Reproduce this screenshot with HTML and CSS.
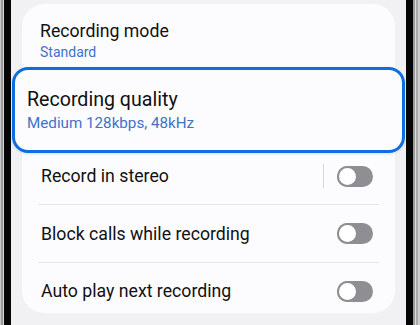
FILE: index.html
```html
<!DOCTYPE html>
<html lang="en">
<head>
<meta charset="utf-8">
<title>Recording settings</title>
<link rel="stylesheet" href="styles.css">
</head>
<body>
<div class="device">
  <div class="frame frame-left"></div>
  <div class="screen">
    <div class="card">
      <div class="item item-mode">
        <div class="title">Recording mode</div>
        <div class="sub">Standard</div>
      </div>
      <div class="highlight">
        <div class="hl-title">Recording quality</div>
        <div class="hl-sub">Medium 128kbps, 48kHz</div>
      </div>
      <div class="row row-stereo">
        <div class="label">Record in stereo</div>
        <div class="vsep"></div>
        <div class="toggle"></div>
      </div>
      <div class="row row-block">
        <div class="label">Block calls while recording</div>
        <div class="toggle"></div>
      </div>
      <div class="row row-auto">
        <div class="label">Auto play next recording</div>
        <div class="toggle"></div>
      </div>
    </div>
  </div>
  <div class="frame frame-right"></div>
</div>
</body>
</html>
```
FILE: styles.css
```css
html, body {
  margin: 0;
  padding: 0;
}
body {
  width: 420px;
  height: 325px;
  overflow: hidden;
  font-family: Roboto, "Noto Sans", sans-serif;
  color: #111;
}
.device {
  display: flex;
  height: 325px;
}
.frame-left {
  width: 11px;
  background: linear-gradient(to right, #c9c9c9 0, #c9c9c9 1px, #9a9a9a 1px, #9a9a9a 3px, #d6d6d6 3px, #d6d6d6 4px, #050505 4px, #050505 11px);
}
.frame-right {
  width: 14px;
  background: linear-gradient(to right, #050505 0, #050505 7px, #9a9a9a 7px, #9a9a9a 9px, #dcdcdc 9px, #dcdcdc 10px, #a9a9a9 10px, #a9a9a9 12px, #cfcfcf 12px, #cfcfcf 14px);
}
.screen {
  flex: 1;
  background: #f1f1f3;
  padding: 4px 11px 0 11px;
}
.card {
  background: #fcfcfe;
  border-radius: 22px;
  height: 309px;
  display: flex;
  flex-direction: column;
}
.item-mode {
  height: 63px;
  box-sizing: border-box;
  padding: 17px 0 0 18px;
}
.title {
  font-size: 17.7px;
  line-height: 20px;
}
.sub {
  margin-top: 2px;
  font-size: 14px;
  line-height: 18px;
  color: #3f72c9;
}
.highlight {
  margin: 0 -10px;
  height: 86px;
  box-sizing: border-box;
  border: 3px solid #0d6ee0;
  border-radius: 16px;
  background: #fcfcfe;
  box-shadow: 0 1px 3px rgba(0, 0, 0, 0.12);
  padding: 18px 0 0 12px;
}
.hl-title {
  font-size: 19.6px;
  line-height: 24px;
}
.hl-sub {
  margin-top: 1px;
  font-size: 15.2px;
  line-height: 20px;
  color: #3f72c9;
}
.row {
  display: flex;
  align-items: center;
  margin: 0 16px;
  padding: 0 6px 0 3px;
  box-sizing: border-box;
  border-bottom: 1px solid #e6e6e8;
}
.row-stereo {
  height: 52px;
  padding-bottom: 5px;
}
.row-block {
  height: 58px;
}
.row-auto {
  height: 50px;
  padding-top: 6px;
  border-bottom: none;
}
.label {
  flex: 1;
  font-size: 17.7px;
  line-height: 20px;
}
.vsep {
  width: 1px;
  height: 24px;
  background: #d8d8da;
  margin-right: 13px;
}
.toggle {
  position: relative;
  width: 36px;
  height: 21px;
  border-radius: 11px;
  background: #8f8f93;
}
.toggle::before {
  content: "";
  position: absolute;
  left: 0;
  top: 0;
  width: 21px;
  height: 21px;
  box-sizing: border-box;
  border-radius: 50%;
  border: 2px solid #8f8f93;
  background: #ffffff;
}
```
